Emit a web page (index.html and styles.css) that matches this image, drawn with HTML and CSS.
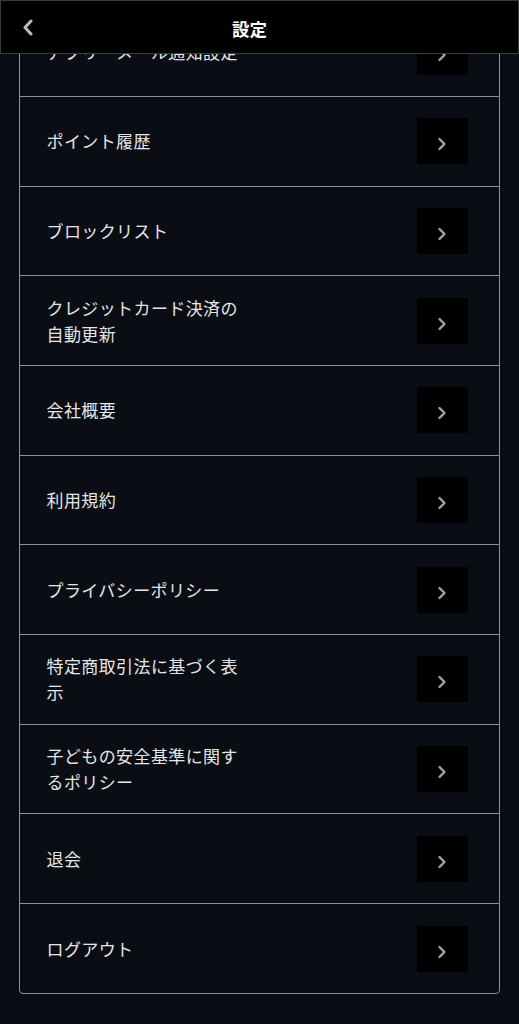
FILE: index.html
```html
<!DOCTYPE html>
<html lang="ja">
<head>
<meta charset="utf-8">
<title>設定</title>
<link rel="stylesheet" href="styles.css">
</head>
<body>
<header class="header">
  <button class="back" aria-label="戻る">
    <svg width="12" height="17" viewBox="0 0 12 17"><path d="M9 2 L3 8.5 L9 15" fill="none" stroke="#bdbdbd" stroke-width="3" stroke-linecap="round" stroke-linejoin="round"/></svg>
  </button>
  <h1 class="title">設定</h1>
</header>
<main class="page">
  <ul class="card">
    <li class="row"><span class="label">アプリ・メール通知設定</span><span class="go"><svg width="10" height="14" viewBox="0 0 10 14"><path d="M2.5 2 L7.5 7 L2.5 12" fill="none" stroke="#a3a3a3" stroke-width="2.4" stroke-linecap="round" stroke-linejoin="round"/></svg></span></li>
    <li class="row"><span class="label">ポイント履歴</span><span class="go"><svg width="10" height="14" viewBox="0 0 10 14"><path d="M2.5 2 L7.5 7 L2.5 12" fill="none" stroke="#a3a3a3" stroke-width="2.4" stroke-linecap="round" stroke-linejoin="round"/></svg></span></li>
    <li class="row"><span class="label">ブロックリスト</span><span class="go"><svg width="10" height="14" viewBox="0 0 10 14"><path d="M2.5 2 L7.5 7 L2.5 12" fill="none" stroke="#a3a3a3" stroke-width="2.4" stroke-linecap="round" stroke-linejoin="round"/></svg></span></li>
    <li class="row"><span class="label">クレジットカード決済の自動更新</span><span class="go"><svg width="10" height="14" viewBox="0 0 10 14"><path d="M2.5 2 L7.5 7 L2.5 12" fill="none" stroke="#a3a3a3" stroke-width="2.4" stroke-linecap="round" stroke-linejoin="round"/></svg></span></li>
    <li class="row"><span class="label">会社概要</span><span class="go"><svg width="10" height="14" viewBox="0 0 10 14"><path d="M2.5 2 L7.5 7 L2.5 12" fill="none" stroke="#a3a3a3" stroke-width="2.4" stroke-linecap="round" stroke-linejoin="round"/></svg></span></li>
    <li class="row"><span class="label">利用規約</span><span class="go"><svg width="10" height="14" viewBox="0 0 10 14"><path d="M2.5 2 L7.5 7 L2.5 12" fill="none" stroke="#a3a3a3" stroke-width="2.4" stroke-linecap="round" stroke-linejoin="round"/></svg></span></li>
    <li class="row"><span class="label">プライバシーポリシー</span><span class="go"><svg width="10" height="14" viewBox="0 0 10 14"><path d="M2.5 2 L7.5 7 L2.5 12" fill="none" stroke="#a3a3a3" stroke-width="2.4" stroke-linecap="round" stroke-linejoin="round"/></svg></span></li>
    <li class="row"><span class="label">特定商取引法に基づく表示</span><span class="go"><svg width="10" height="14" viewBox="0 0 10 14"><path d="M2.5 2 L7.5 7 L2.5 12" fill="none" stroke="#a3a3a3" stroke-width="2.4" stroke-linecap="round" stroke-linejoin="round"/></svg></span></li>
    <li class="row"><span class="label">子どもの安全基準に関するポリシー</span><span class="go"><svg width="10" height="14" viewBox="0 0 10 14"><path d="M2.5 2 L7.5 7 L2.5 12" fill="none" stroke="#a3a3a3" stroke-width="2.4" stroke-linecap="round" stroke-linejoin="round"/></svg></span></li>
    <li class="row"><span class="label">退会</span><span class="go"><svg width="10" height="14" viewBox="0 0 10 14"><path d="M2.5 2 L7.5 7 L2.5 12" fill="none" stroke="#a3a3a3" stroke-width="2.4" stroke-linecap="round" stroke-linejoin="round"/></svg></span></li>
    <li class="row"><span class="label">ログアウト</span><span class="go"><svg width="10" height="14" viewBox="0 0 10 14"><path d="M2.5 2 L7.5 7 L2.5 12" fill="none" stroke="#a3a3a3" stroke-width="2.4" stroke-linecap="round" stroke-linejoin="round"/></svg></span></li>
  </ul>
</main>
</body>
</html>
```

FILE: styles.css
```css
* { box-sizing: border-box; }
html, body {
  margin: 0;
  padding: 0;
  background: #0a0d14;
  font-family: "Noto Sans CJK JP", "Noto Sans", sans-serif;
  color: #e6e6e6;
}
body {
  min-height: 1024px;
}
.header {
  position: fixed;
  top: 0;
  left: 0;
  right: 0;
  height: 54px;
  background: #000;
  border: 1px solid #3c3c3c;
  display: flex;
  align-items: center;
  z-index: 10;
}
.back {
  background: none;
  border: 0;
  padding: 0;
  margin-left: 20px;
  width: 14px;
  height: 20px;
  display: flex;
  align-items: center;
  justify-content: center;
}
.title {
  position: absolute;
  left: 0;
  right: 20px;
  top: 0;
  bottom: 0;
  margin: 0;
  display: flex;
  align-items: center;
  justify-content: center;
  font-size: 17.5px;
  font-weight: 700;
  color: #fff;
  pointer-events: none;
  padding-top: 3px;
}
.page {
  padding: 6.8px 19px 30px 18.5px;
}
.card {
  list-style: none;
  margin: 0;
  padding: 0;
  border: 1.5px solid #8e9196;
  border-radius: 4px;
}
.row {
  height: 89.7px;
  display: flex;
  align-items: center;
  justify-content: space-between;
  padding: 0 31.5px 0 27px;
}
.row:first-child { height: 88.2px; }
.row + .row { border-top: 1.5px solid #8e9196; }
.label {
  width: 200px;
  font-size: 17px;
  letter-spacing: 0.4px;
  line-height: 26px;
  color: #e6e6e6;
}
.go {
  width: 51px;
  height: 46px;
  background: #000;
  display: flex;
  align-items: center;
  justify-content: center;
  padding-top: 6px;
}
```
